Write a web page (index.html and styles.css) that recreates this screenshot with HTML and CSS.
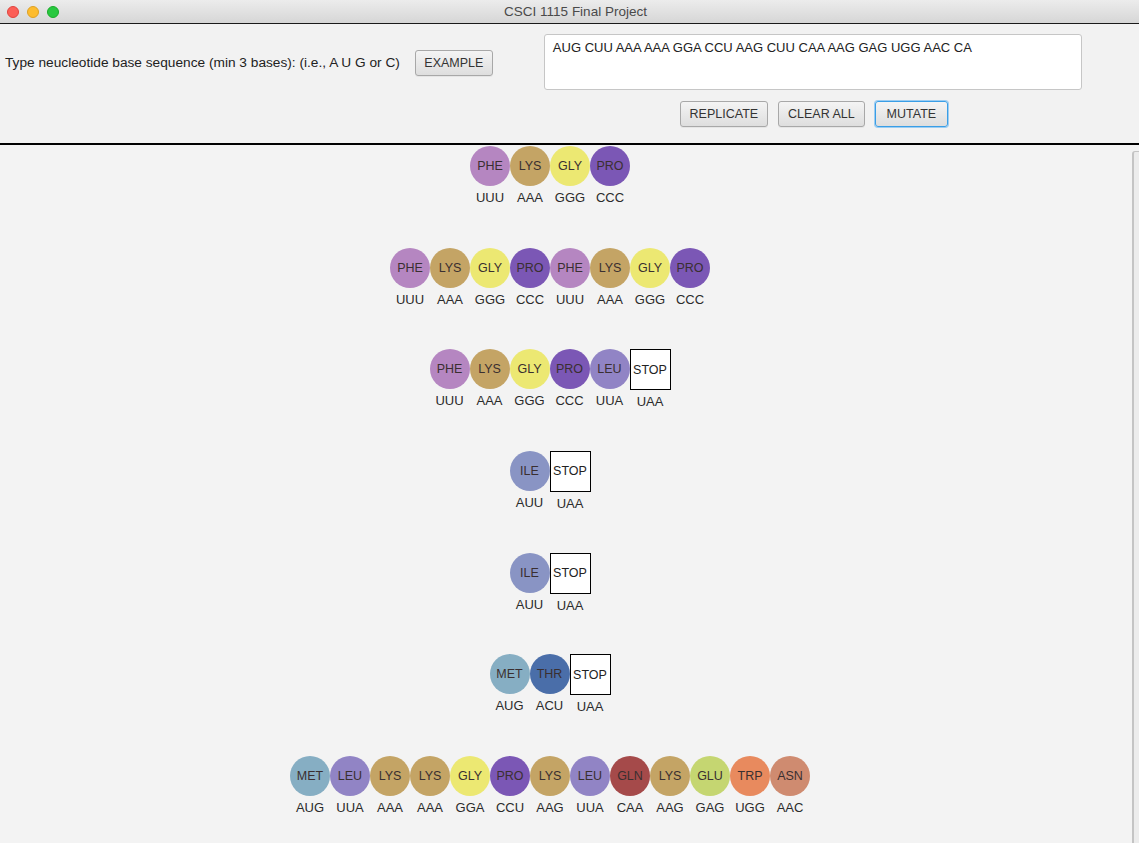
FILE: index.html
```html
<!DOCTYPE html>
<html>
<head>
<meta charset="utf-8">
<title>CSCI 1115 Final Project</title>
<link rel="stylesheet" href="styles.css">
</head>
<body>
<div class="window">
  <header class="titlebar">
    <div class="lights">
      <span class="light red"></span>
      <span class="light yellow"></span>
      <span class="light green"></span>
    </div>
    <div class="title">CSCI 1115 Final Project</div>
  </header>

  <section class="controls">
    <div class="prompt">
      <span class="prompt-text">Type neucleotide base sequence (min 3 bases): (i.e., A U G or C)</span>
      <button class="btn btn-example">EXAMPLE</button>
    </div>
    <div class="input-area">
      <div class="textarea">AUG CUU AAA AAA GGA CCU AAG CUU CAA AAG GAG UGG AAC CA</div>
      <div class="actions">
        <button class="btn btn-replicate">REPLICATE</button>
        <button class="btn btn-clear">CLEAR ALL</button>
        <button class="btn btn-mutate">MUTATE</button>
      </div>
    </div>
  </section>

  <section class="viewport">
    <div class="strands">
      <div class="strand">
        <div class="cell"><div class="aa phe">PHE</div><div class="codon">UUU</div></div>
        <div class="cell"><div class="aa lys">LYS</div><div class="codon">AAA</div></div>
        <div class="cell"><div class="aa gly">GLY</div><div class="codon">GGG</div></div>
        <div class="cell"><div class="aa pro">PRO</div><div class="codon">CCC</div></div>
      </div>
      <div class="strand">
        <div class="cell"><div class="aa phe">PHE</div><div class="codon">UUU</div></div>
        <div class="cell"><div class="aa lys">LYS</div><div class="codon">AAA</div></div>
        <div class="cell"><div class="aa gly">GLY</div><div class="codon">GGG</div></div>
        <div class="cell"><div class="aa pro">PRO</div><div class="codon">CCC</div></div>
        <div class="cell"><div class="aa phe">PHE</div><div class="codon">UUU</div></div>
        <div class="cell"><div class="aa lys">LYS</div><div class="codon">AAA</div></div>
        <div class="cell"><div class="aa gly">GLY</div><div class="codon">GGG</div></div>
        <div class="cell"><div class="aa pro">PRO</div><div class="codon">CCC</div></div>
      </div>
      <div class="strand">
        <div class="cell"><div class="aa phe">PHE</div><div class="codon">UUU</div></div>
        <div class="cell"><div class="aa lys">LYS</div><div class="codon">AAA</div></div>
        <div class="cell"><div class="aa gly">GLY</div><div class="codon">GGG</div></div>
        <div class="cell"><div class="aa pro">PRO</div><div class="codon">CCC</div></div>
        <div class="cell"><div class="aa leu">LEU</div><div class="codon">UUA</div></div>
        <div class="cell"><div class="stop">STOP</div><div class="codon">UAA</div></div>
      </div>
      <div class="strand">
        <div class="cell"><div class="aa ile">ILE</div><div class="codon">AUU</div></div>
        <div class="cell"><div class="stop">STOP</div><div class="codon">UAA</div></div>
      </div>
      <div class="strand">
        <div class="cell"><div class="aa ile">ILE</div><div class="codon">AUU</div></div>
        <div class="cell"><div class="stop">STOP</div><div class="codon">UAA</div></div>
      </div>
      <div class="strand">
        <div class="cell"><div class="aa met">MET</div><div class="codon">AUG</div></div>
        <div class="cell"><div class="aa thr">THR</div><div class="codon">ACU</div></div>
        <div class="cell"><div class="stop">STOP</div><div class="codon">UAA</div></div>
      </div>
      <div class="strand">
        <div class="cell"><div class="aa met">MET</div><div class="codon">AUG</div></div>
        <div class="cell"><div class="aa leu">LEU</div><div class="codon">UUA</div></div>
        <div class="cell"><div class="aa lys">LYS</div><div class="codon">AAA</div></div>
        <div class="cell"><div class="aa lys">LYS</div><div class="codon">AAA</div></div>
        <div class="cell"><div class="aa gly">GLY</div><div class="codon">GGA</div></div>
        <div class="cell"><div class="aa pro">PRO</div><div class="codon">CCU</div></div>
        <div class="cell"><div class="aa lys">LYS</div><div class="codon">AAG</div></div>
        <div class="cell"><div class="aa leu">LEU</div><div class="codon">UUA</div></div>
        <div class="cell"><div class="aa gln">GLN</div><div class="codon">CAA</div></div>
        <div class="cell"><div class="aa lys">LYS</div><div class="codon">AAG</div></div>
        <div class="cell"><div class="aa glu">GLU</div><div class="codon">GAG</div></div>
        <div class="cell"><div class="aa trp">TRP</div><div class="codon">UGG</div></div>
        <div class="cell"><div class="aa asn">ASN</div><div class="codon">AAC</div></div>
      </div>
    </div>
    <div class="scrollbar"><div class="scroll-thumb"></div></div>
  </section>
</div>
</body>
</html>
```
FILE: styles.css
```css
* { box-sizing: border-box; }

html, body {
  margin: 0;
  padding: 0;
  width: 1139px;
  height: 843px;
  overflow: hidden;
  background: #f3f3f3;
  font-family: "Liberation Sans", Arial, Helvetica, sans-serif;
  color: #2b2b2b;
}

.window {
  display: flex;
  flex-direction: column;
  height: 843px;
}

/* Title bar */
.titlebar {
  position: relative;
  height: 24px;
  flex: 0 0 24px;
  background: linear-gradient(#ececec, #d6d6d6);
  border-bottom: 1px solid #1a1a1a;
  display: flex;
  align-items: center;
  justify-content: center;
}

.lights {
  position: absolute;
  left: 7px;
  top: 6px;
  display: flex;
  gap: 8px;
}

.light {
  width: 12px;
  height: 12px;
  border-radius: 50%;
  display: block;
}
.light.red { background: #fc5f57; border: 1px solid #e0443e; }
.light.yellow { background: #fdbc2e; border: 1px solid #dea123; }
.light.green { background: #28c840; border: 1px solid #1aab29; }

.title {
  font-size: 13.5px;
  color: #4a4a4a;
  padding-left: 12px;
}

/* Controls panel */
.controls {
  flex: 0 0 120px;
  height: 120px;
  background: #f2f2f2;
  border-bottom: 1px solid #000;
  display: flex;
  align-items: flex-start;
  padding: 10px 0 0 5px;
}

.prompt {
  display: flex;
  align-items: center;
  height: 56px;
  gap: 15px;
}

.prompt-text {
  font-size: 13.7px;
  color: #222;
  white-space: nowrap;
}

.btn {
  font-family: "Liberation Sans", Arial, Helvetica, sans-serif;
  font-size: 12.5px;
  color: #333;
  height: 26px;
  padding: 0;
  background: linear-gradient(#f4f4f4, #dedede);
  border: 1px solid #a8a8a8;
  border-radius: 3px;
  box-shadow: 0 1px 0 rgba(0,0,0,0.05);
}

.btn-example { width: 78px; margin-top: 2px; }
.btn-replicate { width: 88px; }
.btn-clear { width: 87px; }
.btn-mutate {
  width: 73px;
  border: 1px solid #3a9ee6;
  box-shadow: 0 0 0 1px #9ccdf2;
}

.input-area {
  margin-left: 51px;
  display: flex;
  flex-direction: column;
  align-items: center;
  gap: 11px;
}

.textarea {
  width: 538px;
  height: 56px;
  background: #fff;
  border: 1px solid #c6c6c6;
  border-radius: 3px;
  padding: 5px 8px;
  font-size: 13px;
  color: #222;
}

.actions {
  display: flex;
  gap: 10px;
  padding-left: 2px;
}

/* Viewport with strands */
.viewport {
  flex: 1;
  display: flex;
  background: #f3f3f3;
  border-top: 1px solid #000;
}

.strands {
  width: 1100px;
  display: flex;
  flex-direction: column;
  align-items: center;
  gap: 39.67px;
  padding-top: 1px;
}

.strand {
  display: flex;
  align-items: flex-start;
  height: 62px;
}

.cell {
  display: flex;
  flex-direction: column;
  align-items: center;
  width: 40px;
}

.aa {
  width: 40px;
  height: 40px;
  border-radius: 50%;
  display: flex;
  align-items: center;
  justify-content: center;
  font-size: 12.5px;
  color: #3a2f30;
}

.stop {
  width: 41px;
  height: 41px;
  margin-bottom: -1px;
  background: #fff;
  border: 1px solid #000;
  display: flex;
  align-items: center;
  justify-content: center;
  font-size: 12.5px;
  color: #222;
}

.cell:has(.stop) { width: 41px; }
.cell:has(.stop) .codon { margin-top: 5px; }

.codon {
  margin-top: 4px;
  font-size: 13px;
  line-height: 16px;
  color: #2b2b2b;
}

.phe { background: #b586c1; }
.lys { background: #c4a465; }
.gly { background: #ece872; }
.pro { background: #7b57b5; }
.leu { background: #9184c5; }
.ile { background: #8994c4; }
.met { background: #86aec3; }
.thr { background: #4a6ea9; }
.gln { background: #a54a4a; }
.glu { background: #c5d671; }
.trp { background: #e88a5e; }
.asn { background: #cf8b70; }

.scrollbar {
  margin-left: auto;
  width: 7px;
  padding-top: 6px;
  display: flex;
}

.scroll-thumb {
  width: 7px;
  height: 100%;
  background: #ececec;
  border-left: 2px solid #c4c4c4;
  border-top: 1px solid #c4c4c4;
  border-top-left-radius: 3px;
}
```
